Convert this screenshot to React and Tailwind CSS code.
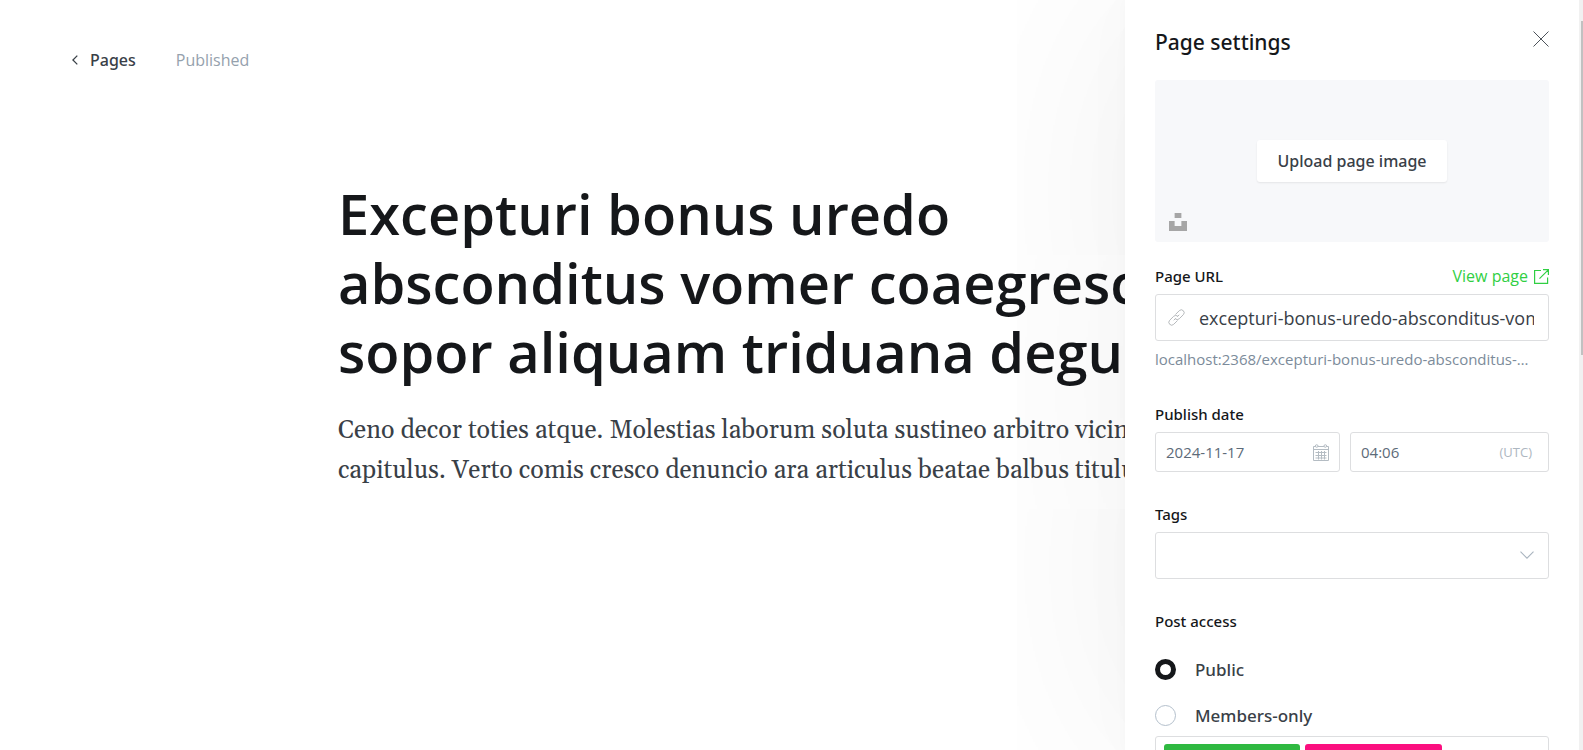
const sans = "font-['Open_Sans','Noto_Sans',sans-serif]";

function ChevronLeft() {
  return (
    <svg className="h-[10px] w-[6px]" viewBox="0 0 6 10" fill="none" stroke="#394047" strokeWidth="1.3" aria-hidden="true">
      <path d="M5.3.6.9 5l4.4 4.4" />
    </svg>
  );
}

function CloseIcon() {
  return (
    <svg className="size-4" viewBox="0 0 16 16" fill="none" stroke="#394047" strokeWidth=".9" aria-hidden="true">
      <path d="M.5.5l15 15M15.5.5l-15 15" />
    </svg>
  );
}

function UnsplashIcon() {
  return (
    <svg className="size-[18px]" viewBox="0 0 32 32" fill="#a6a6a6" aria-hidden="true">
      <path d="M10 9V0h12v9H10zm12 5h10v18H0V14h10v9h12v-9z" />
    </svg>
  );
}

function ExternalIcon() {
  return (
    <svg className="size-[15px]" viewBox="0 0 15 15" fill="none" stroke="#30cf43" strokeWidth="1.2" aria-hidden="true">
      <path d="M7 1.5H.6v12.900h13V8.500M9 .6h5.400v5.400M14.300.8 5.500 9.600" />
    </svg>
  );
}

function LinkIcon() {
  return (
    <svg className="size-[17px] shrink-0" viewBox="0 0 24 24" fill="none" stroke="#b5b8bb" strokeWidth="1.4" strokeLinecap="round" strokeLinejoin="round" aria-hidden="true">
      <path d="M10.200 13.800a4 4 0 0 0 5.700 0l5.700-5.700a4 4 0 0 0-5.700-5.700l-5 5M13.800 10.200a4 4 0 0 0-5.700 0l-5.700 5.700a4 4 0 0 0 5.700 5.700l5-5" />
      <path d="M8.500 15.500l1.800-1.800M15.500 8.500l-1.800 1.800" />
    </svg>
  );
}

function CalendarIcon() {
  return (
    <svg className="h-[17px] w-4 shrink-0" viewBox="0 0 16 17" fill="none" stroke="#b4bcc3" strokeWidth="1" aria-hidden="true">
      <path d="M2.500 2.500h-2v14h15v-14h-2M5 2.500h6M.5 5.500h15M2.500 8.500h11M2.500 11.500h11M2.500 14h11M5.500 7v8.500M8.500 7v8.500M11.500 7v8.500" />
      <circle cx="3.700" cy="2" r="1.300" />
      <circle cx="12.300" cy="2" r="1.300" />
    </svg>
  );
}

function FieldLabel({ htmlFor, children }) {
  return (
    <label htmlFor={htmlFor} className="block font-['Noto_Sans',sans-serif] text-[15px] leading-5 font-medium text-[#15171a]">
      {children}
    </label>
  );
}

function AccessOption({ label, defaultChecked }) {
  return (
    <label className="flex items-center gap-[19px] font-['Noto_Sans',sans-serif] text-[17px] leading-[21px] font-medium text-[#394047]">
      <input
        type="radio"
        name="access"
        defaultChecked={defaultChecked}
        className="size-[21px] appearance-none rounded-full border border-[#b4c0cc] bg-white checked:border-[5px] checked:border-[#15171a]"
      />
      {label}
    </label>
  );
}

function Editor() {
  return (
    <main className="min-w-0 flex-1">
      <header className="flex items-center gap-10 px-[72px] pt-12">
        <a href="#pages" className="flex items-center gap-3 font-['Noto_Sans',sans-serif] text-[16px] leading-6 font-medium text-[#394047]">
          <ChevronLeft />
          Pages
        </a>
        <span className="text-[16px] leading-6 text-[#95a1ad]">Published</span>
      </header>
      <article className="pt-[107px] pl-[338px] whitespace-nowrap">
        <h1 className="text-[56px] leading-[69px] font-semibold text-[#15171a]">
          Excepturi bonus uredo
          <br />
          absconditus vomer coaegresco
          <br />
          sopor aliquam triduana degusto
        </h1>
        <p className="mt-[25px] font-['Georgia','Gelasio','DejaVu_Serif',serif] text-[25px] leading-10 text-[#394047]">
          Ceno decor toties atque. Molestias laborum soluta sustineo arbitro vicinus
          <br />
          capitulus. Verto comis cresco denuncio ara articulus beatae balbus titulus
        </p>
      </article>
    </main>
  );
}

function Settings() {
  return (
    <aside className="relative z-10 flex w-[458px] shrink-0 bg-white shadow-[0_0_240px_rgba(0,0,0,0.065),0_0_60px_rgba(0,0,0,0.02),0_0_12px_rgba(0,0,0,0.02)]">
      <form className="min-w-0 flex-1 px-[30px]">
        <div className="flex h-20 items-start justify-between">
          <h2 className="pt-7 font-['Noto_Sans',sans-serif] text-[21px] leading-7 font-medium text-[#15171a]">Page settings</h2>
          <button type="button" aria-label="Close" className="mt-[31px]">
            <CloseIcon />
          </button>
        </div>

        <div className="relative flex h-[162px] items-center justify-center rounded-[3px] bg-[#f7f8fa]">
          <button type="button" className="h-[42px] rounded-[3px] bg-white px-5 font-['Noto_Sans',sans-serif] text-[16px] font-medium text-[#394047] shadow-[0_1px_2px_rgba(0,0,0,0.08)]">
            Upload page image
          </button>
          <button type="button" aria-label="Unsplash" className="absolute bottom-[11px] left-[14px]">
            <UnsplashIcon />
          </button>
        </div>

        <section className="mt-[22px]">
          <div className="flex items-center justify-between pb-[6px]">
            <FieldLabel htmlFor="url">Page URL</FieldLabel>
            <a href="#view" className="flex items-center gap-[6px] text-[16px] leading-6 text-[#30cf43]">
              View page
              <ExternalIcon />
            </a>
          </div>
          <div className="flex h-[47px] items-center gap-[14px] rounded-[3px] border border-[#dddee0] pr-[14px] pl-3">
            <LinkIcon />
            <input id="url" type="text" defaultValue="excepturi-bonus-uredo-absconditus-vomer-coaegresco" className="min-w-0 flex-1 text-[18px] leading-6 text-[#394047] outline-none" />
          </div>
          <p className="mt-2 truncate pr-5 text-[15px] leading-5 text-[#7c8b9a]">localhost:2368/excepturi-bonus-uredo-absconditus-vomer-coaegresco</p>
        </section>

        <section className="mt-[35px]">
          <FieldLabel htmlFor="date">Publish date</FieldLabel>
          <div className="mt-2 flex gap-[10px]">
            <div className="flex h-10 w-[185px] shrink-0 items-center rounded-[3px] border border-[#dddee0] px-[10px]">
              <input id="date" type="text" defaultValue="2024-11-17" className="min-w-0 flex-1 text-[15px] leading-5 text-[#5d6b79] outline-none" />
              <CalendarIcon />
            </div>
            <div className="flex h-10 min-w-0 flex-1 items-center rounded-[3px] border border-[#dddee0] pr-4 pl-[10px]">
              <input aria-label="Publish time" type="text" defaultValue="04:06" className="min-w-0 flex-1 text-[15px] leading-5 text-[#5d6b79] outline-none" />
              <span className="text-[13px] leading-5 text-[#aeb7c1]">(UTC)</span>
            </div>
          </div>
        </section>

        <section className="mt-8">
          <FieldLabel htmlFor="tags">Tags</FieldLabel>
          <div className="relative mt-2">
            <select id="tags" defaultValue="" className="block h-[47px] w-full appearance-none rounded-[3px] border border-[#dddee0] bg-white px-3">
              <option value=""></option>
            </select>
            <svg className="pointer-events-none absolute top-[19px] right-[15px] h-2 w-[14px]" viewBox="0 0 14 8" fill="none" stroke="#a9b4bf" strokeWidth="1.100" aria-hidden="true">
              <path d="M.5.7 7 7.200 13.500.7" />
            </svg>
          </div>
        </section>

        <fieldset className="mt-8">
          <legend className="font-['Noto_Sans',sans-serif] text-[15px] leading-5 font-medium text-[#15171a]">Post access</legend>
          <div className="mt-[28px] flex flex-col gap-[25px]">
            <AccessOption label="Public" defaultChecked />
            <AccessOption label="Members-only" />
          </div>
          <div className="mt-[10px] flex h-[47px] gap-[5px] rounded-[3px] border border-[#dddee0] px-2 py-[7px]">
            <button type="button" aria-label="Free members" className="w-[136px] rounded-[3px] bg-[#2fb941]" />
            <button type="button" aria-label="Paid members" className="w-[137px] rounded-[3px] bg-[#fb0f7f]" />
          </div>
        </fieldset>
      </form>
      <div className="w-1 bg-[#f1f1f1] pt-[21px] pl-[2px]">
        <div className="h-[334px] bg-[#c1c1c1]" />
      </div>
    </aside>
  );
}

export default function App() {
  return (
    <div className={`flex h-screen overflow-hidden bg-white ${sans}`}>
      <Editor />
      <Settings />
    </div>
  );
}
